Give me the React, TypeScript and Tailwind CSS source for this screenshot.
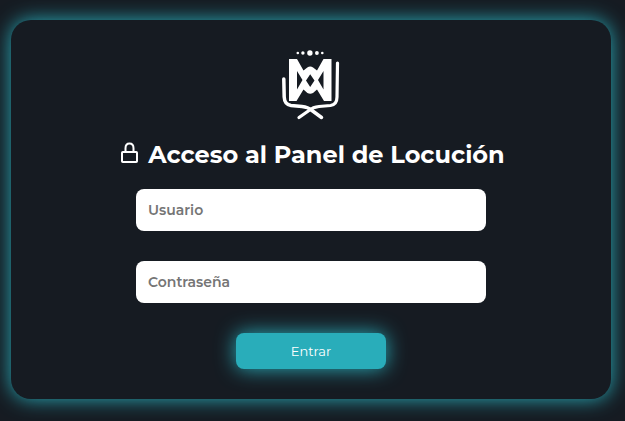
import { FormEvent } from "react";

function Logo() {
  return (
    <svg viewBox="0 0 80 70" className="h-[70px] w-20" role="img" aria-label="Logo">
      <g fill="#fff">
        <circle cx="26.800" cy="3" r="1.300" />
        <circle cx="31.900" cy="3" r="1.700" />
        <circle cx="38.900" cy="3" r="2.700" />
        <circle cx="45.900" cy="3" r="1.900" />
        <circle cx="51.300" cy="3" r="1.300" />
        <path
          fillRule="evenodd"
          d="M18 9H26L32.500 20.500L36.300 17.500Q39.200 15.500 42.100 17.500L46 20.500L52.500 9H60.500V51H53L46 39.500L42 43Q39.200 44.500 36.400 43L32.500 39.500L25.500 51H18ZM26 21L31.500 30L26 39.500ZM52.500 21L47 30L52.500 39.500ZM39.200 24.300L43.500 30.500L39.200 36.900L35 30.500Z"
        />
      </g>
      <g fill="none" stroke="#fff" strokeLinecap="round" strokeLinejoin="round">
        <path d="M12.800 29L13.200 47Q13.500 54.500 20 55.500L31 56.500Q37 57 41 60.500L50.500 67.500" strokeWidth="3.500" />
        <path d="M66.500 13L66 47Q66 54.500 59.500 55.500L48 56.500Q42 57 38 60.500L28 67.500" strokeWidth="3.200" />
      </g>
    </svg>
  );
}

function LockIcon() {
  return (
    <svg
      viewBox="-4 0 23 26"
      className="h-[26px] w-[23px]"
      fill="none"
      stroke="#fff"
      strokeWidth="2"
      aria-hidden="true"
    >
      <rect x="1" y="10" width="15" height="10" rx="0.800" />
      <path d="M4.500 10V6.200C4.500 3.300 6 1.500 8.500 1.500S12.500 3.300 12.500 6.200V10" />
    </svg>
  );
}

const fieldClass =
  "h-[42px] w-full rounded-lg bg-white px-3 text-sm font-semibold text-gray-900 outline-none placeholder:text-[#757575]";

export default function App() {
  const handleSubmit = (event: FormEvent) => event.preventDefault();

  return (
    <main className="flex min-h-screen items-start justify-center bg-[#161b22] pt-5 pr-[14px] pb-[22px] pl-[11px] font-['Montserrat','Open_Sans',sans-serif]">
      <section className="flex w-full max-w-[600px] flex-col items-center rounded-[20px] bg-[#161b22] p-[30px] shadow-[0_0_20px_#29adba]">
        <Logo />
        <h1 className="mt-5 flex items-center gap-2 whitespace-nowrap text-2xl leading-[29px] font-bold text-white">
          <LockIcon />
          Acceso al Panel de Locución
        </h1>
        <form onSubmit={handleSubmit} className="mt-5 flex w-full max-w-[350px] flex-col items-center gap-[30px]">
          <input type="text" aria-label="Usuario" placeholder="Usuario" className={fieldClass} />
          <input type="password" aria-label="Contraseña" placeholder="Contraseña" className={fieldClass} />
          <button
            type="submit"
            className="h-9 w-[150px] rounded-lg bg-[#29adba] text-[13px] leading-4 text-white shadow-[0_0_20px_#29adba]"
          >
            Entrar
          </button>
        </form>
      </section>
    </main>
  );
}
